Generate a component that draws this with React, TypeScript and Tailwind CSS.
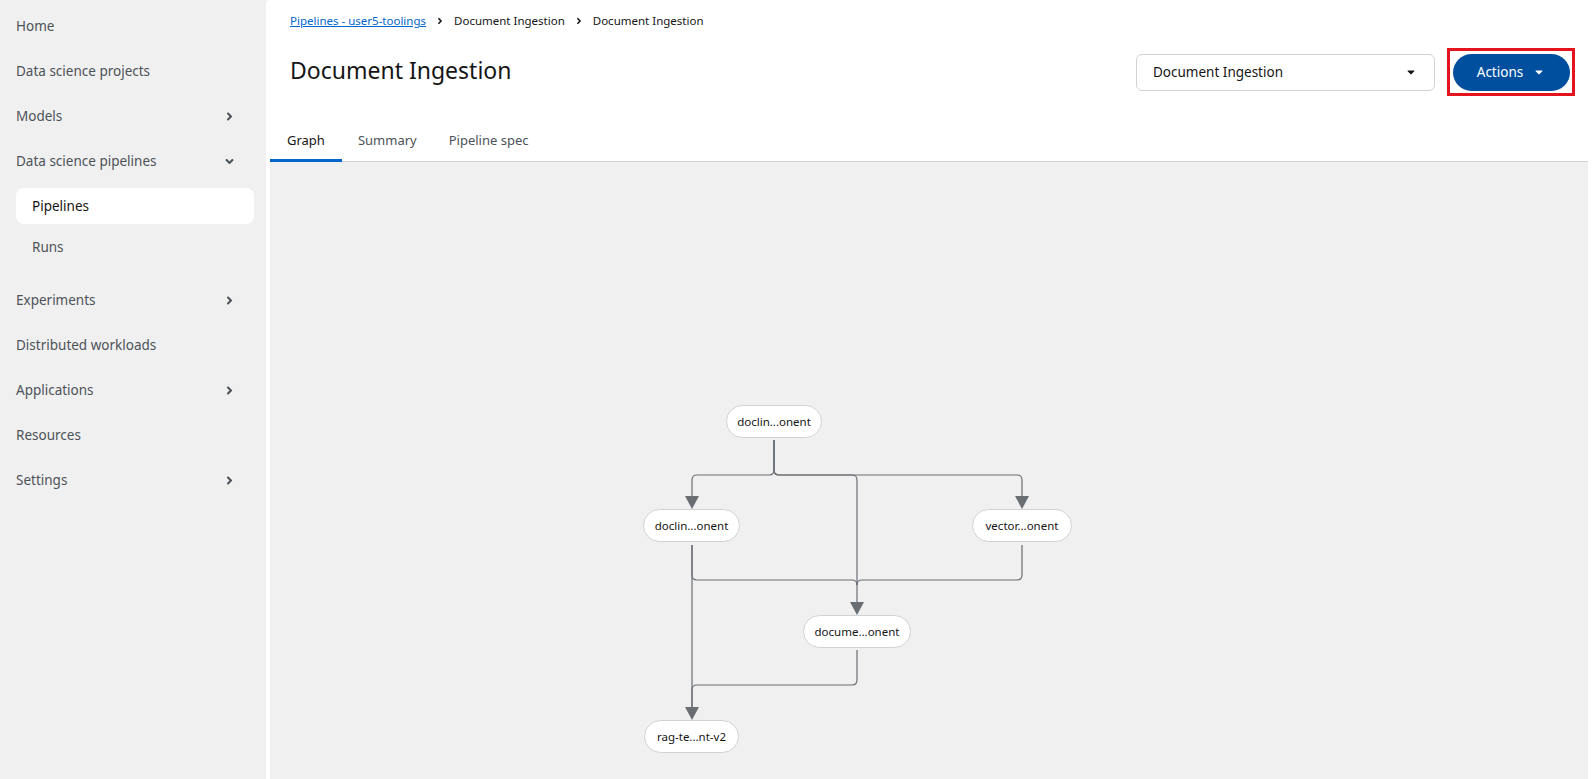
import { FaAngleRight, FaAngleDown, FaCaretDown } from "react-icons/fa";

const font = "font-['Noto_Sans',sans-serif]";

type NavItem = { label: string; chevron?: "right" | "down" };

const topItems: NavItem[] = [
    { label: "Home" },
    { label: "Data science projects" },
    { label: "Models", chevron: "right" },
    { label: "Data science pipelines", chevron: "down" },
];

const bottomItems: NavItem[] = [
    { label: "Experiments", chevron: "right" },
    { label: "Distributed workloads" },
    { label: "Applications", chevron: "right" },
    { label: "Resources" },
    { label: "Settings", chevron: "right" },
];

function NavRow({ item }: { item: NavItem }) {
    return (
        <div className="h-[45px] flex items-center justify-between pl-[16px] pr-[30px] text-[13.5px] text-[#4d5258]">
            <span>{item.label}</span>
            {item.chevron === "right" && <FaAngleRight className="size-[13px] text-[#4d5258]" />}
            {item.chevron === "down" && <FaAngleDown className="size-[13px] text-[#4d5258]" />}
        </div>
    );
}

function Sidebar() {
    return (
        <nav className="w-[266px] shrink-0 h-full bg-[#f0f0f0] pt-[4px]">
            {topItems.map((it) => (
                <NavRow key={it.label} item={it} />
            ))}
            <div className="mt-[4px] pl-[16px] pr-[12px] flex flex-col gap-[5px] mb-[13px]">
                <div className="h-[36px] rounded-lg bg-white flex items-center px-[16px] text-[13.5px] text-[#151515]">
                    Pipelines
                </div>
                <div className="h-[36px] rounded-lg flex items-center px-[16px] text-[13.5px] text-[#4d5258]">
                    Runs
                </div>
            </div>
            {bottomItems.map((it) => (
                <NavRow key={it.label} item={it} />
            ))}
        </nav>
    );
}

// node boxes, in canvas coordinates
const nodes = [
    { label: "doclin...onent", x: 456, y: 243, w: 96 },
    { label: "doclin...onent", x: 373, y: 347, w: 97 },
    { label: "vector...onent", x: 702, y: 347, w: 100 },
    { label: "docume...onent", x: 533, y: 453, w: 108 },
    { label: "rag-te...nt-v2", x: 374, y: 558, w: 95 },
];

const edges = [
    "M504 278 V308 Q504 313 499 313 H427 Q422 313 422 318 V335",
    "M504 278 V308 Q504 313 509 313 H747 Q752 313 752 318 V335",
    "M504 278 V308 Q504 313 509 313 H582 Q587 313 587 318 V441",
    "M422 383 V413 Q422 418 427 418 H582 Q587 418 587 423",
    "M752 383 V413 Q752 418 747 418 H592 Q587 418 587 423",
    "M422 383 V546",
    "M587 488 V518 Q587 523 582 523 H427 Q422 523 422 528 V546",
];

const arrows = [
    { x: 422, y: 347 },
    { x: 752, y: 347 },
    { x: 587, y: 453 },
    { x: 422, y: 558 },
];

function Graph() {
    return (
        <div className="relative flex-1 ml-[4px] mr-[6px] bg-[#f0f0f0] overflow-hidden">
            <svg className="absolute inset-0" width="1318" height="620">
                {edges.map((d, i) => (
                    <path key={i} d={d} fill="none" stroke="#6a6e73" strokeWidth="1.2" />
                ))}
                {arrows.map((a, i) => (
                    <path key={i} d={`M${a.x - 7} ${a.y - 13} L${a.x + 7} ${a.y - 13} L${a.x} ${a.y} Z`} fill="#6a6e73" />
                ))}
            </svg>
            {nodes.map((n, i) => (
                <div
                    key={i}
                    className="absolute h-[33px] rounded-full bg-white border border-[#d2d2d2] flex items-center justify-center text-[11.5px] text-[#151515]"
                    style={{ left: n.x, top: n.y, width: n.w }}
                >
                    {n.label}
                </div>
            ))}
        </div>
    );
}

export default function App() {
    return (
        <div className={`${font} w-[1594px] h-[779px] flex bg-[#f0f0f0] overflow-hidden`}>
            <Sidebar />
            <main className="flex-1 flex flex-col bg-white rounded-tl-sm">
                <div className="pl-[24px] pr-[19px] pt-[13px]">
                    {/* breadcrumb */}
                    <div className="flex items-center h-[16px] text-[11.5px] text-[#151515]">
                        <span className="text-[#0066cc] underline">Pipelines - user5-toolings</span>
                        <FaAngleRight className="size-[10px] mx-[9px] text-[#151515]" />
                        <span>Document Ingestion</span>
                        <FaAngleRight className="size-[10px] mx-[9px] text-[#151515]" />
                        <span>Document Ingestion</span>
                    </div>

                    <div className="mt-[19px] h-[48px] flex items-center justify-between">
                        <h1 className="text-[23px] leading-[30px] mb-[5px] text-[#151515]">Document Ingestion</h1>
                        <div className="flex items-center gap-[12px]">
                            <div className="w-[299px] h-[37px] border border-[#d2d2d2] rounded-[6px] flex items-center justify-between pl-[16px] pr-[17px] text-[13.5px] text-[#151515]">
                                <span>Document Ingestion</span>
                                <FaCaretDown className="size-[12px]" />
                            </div>
                            <div className="w-[128px] h-[48px] border-[3px] border-[#e3141e] flex items-center justify-center">
                                <button className="w-[117px] h-[37px] rounded-full bg-[#004f9e] text-white text-[13.5px] flex items-center justify-center gap-[10px]">
                                    Actions
                                    <FaCaretDown className="size-[12px]" />
                                </button>
                            </div>
                        </div>
                    </div>
                </div>

                {/* tabs */}
                <div className="mt-[18px] ml-[4px] mr-[6px] flex border-b border-[#d2d2d2] text-[13px]">
                    <div className="relative h-[47px] pt-[6px] px-[17px] flex items-center text-[#151515]">
                        Graph
                        <span className="absolute left-0 right-0 -bottom-[1px] h-[3px] bg-[#0066cc]" />
                    </div>
                    <div className="h-[47px] pt-[6px] px-[16px] flex items-center text-[#4d5258]">Summary</div>
                    <div className="h-[47px] pt-[6px] px-[16px] flex items-center text-[#4d5258]">Pipeline spec</div>
                </div>

                <Graph />
            </main>
        </div>
    );
}
